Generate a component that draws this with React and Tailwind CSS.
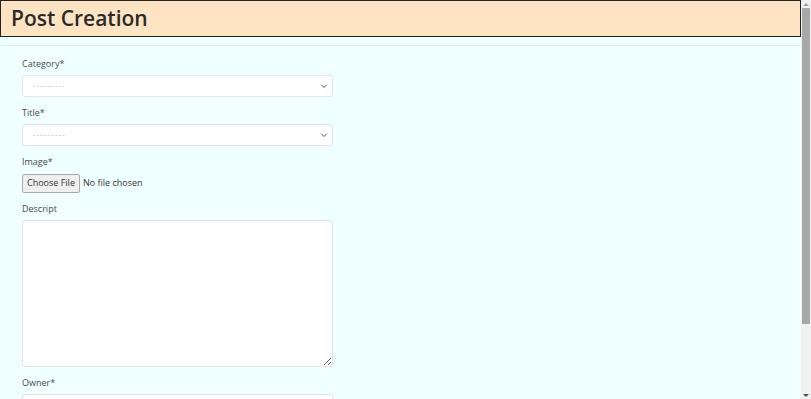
import React from "react";

function Chevron() {
  return (
    <svg width="8" height="8" viewBox="0 0 16 16" fill="none">
      <path d="M3 6l5 5 5-5" stroke="#555" strokeWidth="2" strokeLinecap="round" strokeLinejoin="round" />
    </svg>
  );
}

function SelectBox() {
  return (
    <div className="w-[311px] h-[22px] bg-white border border-[#e3e6e8] rounded-[3px] flex items-center justify-between pl-[10px] pr-[4px] mb-[8px]">
      <span className="text-[7px] text-[#aaa] tracking-[1.4px]">---------</span>
      <Chevron />
    </div>
  );
}

function Label({ children }) {
  return <div className="h-[15px] leading-[15px] text-[9px] text-[#4a4a4a] mb-[4px]">{children}</div>;
}

export default function App() {
  return (
    <div className="h-[399px] overflow-hidden flex bg-[#f0ffff]" style={{ fontFamily: '"Open Sans", "Noto Sans", sans-serif' }}>
      <div className="flex-1 flex flex-col">
        <div className="shrink-0 h-[37px] bg-[#ffe4c4] border border-[#222] flex items-center pl-[10px]">
          <h1 className="text-[21px] font-semibold text-[#2a2a2a] leading-none">Post Creation</h1>
        </div>
        <div className="shrink-0 h-[9px] border-b border-[#dfeeee]"></div>
        <form className="shrink-0 pl-[22px] pt-[10px]">
          <Label>Category*</Label>
          <SelectBox />
          <Label>Title*</Label>
          <SelectBox />
          <Label>Image*</Label>
          <div className="flex items-center gap-[3px] h-[20px] mb-[8px] text-[9px] text-[#333]">
            <span className="h-[19px] px-[4px] flex items-center bg-[#efefef] border border-[#aaa] rounded-[2px]">Choose File</span>
            <span>No file chosen</span>
          </div>
          <Label>Descript</Label>
          <textarea className="block w-[311px] h-[147px] bg-white border border-[#e3e6e8] rounded-[3px] mb-[8px]"></textarea>
          <Label>Owner*</Label>
          <div className="w-[311px] h-[22px] bg-white border border-[#e3e6e8] rounded-[3px]"></div>
        </form>
      </div>
      <div className="shrink-0 w-[10px] bg-[#f1f1f1] flex flex-col items-center">
        <div className="h-[8px] flex items-center justify-center">
          <div className="w-0 h-0 border-l-[3px] border-r-[3px] border-b-[3px] border-l-transparent border-r-transparent border-b-[#a3a3a3]"></div>
        </div>
        <div className="w-[8px] h-[316px] bg-[#a8a8a8] rounded-[1px]"></div>
        <div className="flex-1"></div>
        <div className="h-[8px] flex items-center justify-center">
          <div className="w-0 h-0 border-l-[3px] border-r-[3px] border-t-[3px] border-l-transparent border-r-transparent border-t-[#505050]"></div>
        </div>
      </div>
    </div>
  );
}
